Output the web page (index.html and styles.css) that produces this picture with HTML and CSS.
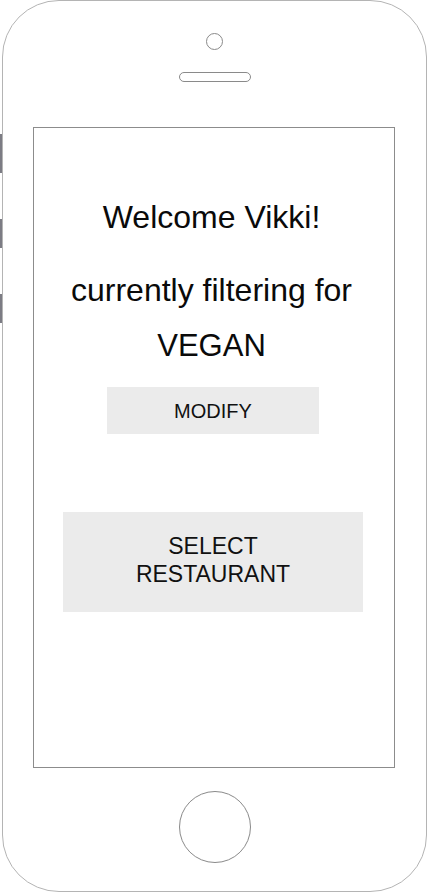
FILE: index.html
```html
<!DOCTYPE html>
<html>
<head>
<meta charset="utf-8">
<link rel="stylesheet" href="styles.css">
</head>
<body>
<div class="phone">
  <span class="side-btn side-mute"></span>
  <span class="side-btn side-up"></span>
  <span class="side-btn side-down"></span>
  <div class="camera"></div>
  <div class="speaker"></div>
  <div class="screen">
    <p class="line welcome">Welcome Vikki!</p>
    <p class="line filtering">currently filtering for</p>
    <p class="line diet">VEGAN</p>
    <div class="btn btn-modify">MODIFY</div>
    <div class="btn btn-select">SELECT<br>RESTAURANT</div>
  </div>
  <div class="home"></div>
</div>
</body>
</html>
```

FILE: styles.css
```css
html, body {
  margin: 0;
  padding: 0;
  background: #fff;
}

body {
  font-family: "Liberation Sans", Arial, sans-serif;
  color: #0a0a0a;
}

.phone {
  position: relative;
  box-sizing: border-box;
  margin-left: 2px;
  width: 425px;
  height: 892px;
  border: 1px solid #b4b4b4;
  border-radius: 57px;
  display: flex;
  flex-direction: column;
  align-items: center;
}

.side-btn {
  position: absolute;
  left: -3px;
  width: 2px;
  background: #7c7c84;
}
.side-mute { top: 133px; height: 39px; }
.side-up { top: 218px; height: 29px; }
.side-down { top: 293px; height: 29px; }

.camera {
  box-sizing: border-box;
  margin-top: 32px;
  width: 17px;
  height: 17px;
  border: 1.5px solid #8a8a8a;
  border-radius: 50%;
}

.speaker {
  box-sizing: border-box;
  margin-top: 22px;
  width: 72px;
  height: 10px;
  border: 1.5px solid #8a8a8a;
  border-radius: 5px;
}

.screen {
  box-sizing: border-box;
  margin-top: 45px;
  margin-left: -1px;
  width: 362px;
  height: 641px;
  border: 1.5px solid #8c8c8c;
  display: flex;
  flex-direction: column;
  align-items: center;
  padding-top: 71px;
}

.line {
  margin: 0 5px 0 0;
  font-size: 32px;
  line-height: 37px;
  text-align: center;
}

.filtering { margin-top: 36px; }
.diet { margin-top: 18px; font-size: 31px; }

.btn {
  background: #ebebeb;
  display: flex;
  align-items: center;
  justify-content: center;
  text-align: center;
  color: #111;
  margin-right: 2px;
}

.btn-modify {
  margin-top: 23px;
  width: 212px;
  height: 47px;
  font-size: 20px;
  padding-top: 2px;
  box-sizing: border-box;
}

.btn-select {
  margin-top: 78px;
  width: 300px;
  height: 100px;
  font-size: 23px;
  line-height: 28px;
  padding-bottom: 4px;
  box-sizing: border-box;
}

.home {
  box-sizing: border-box;
  margin-top: 23px;
  width: 72px;
  height: 72px;
  border: 1.5px solid #8a8a8a;
  border-radius: 50%;
}
```
